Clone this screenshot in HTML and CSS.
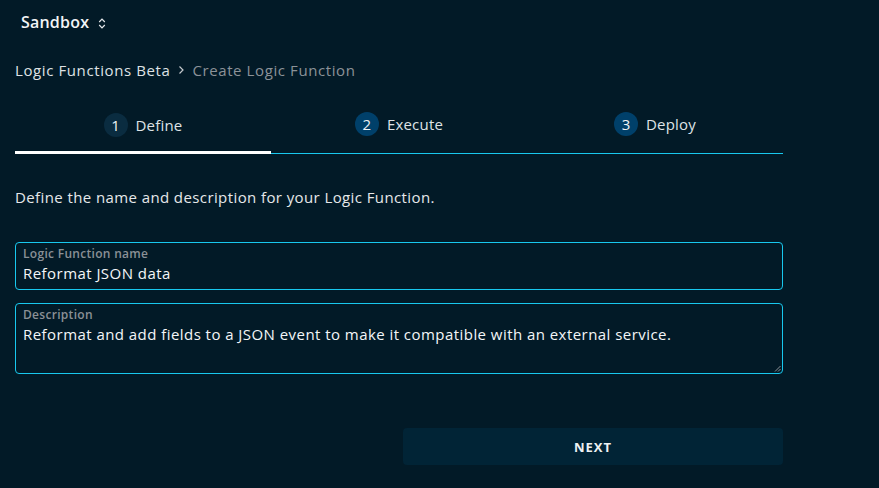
FILE: index.html
```html
<!DOCTYPE html>
<html>
<head>
<meta charset="utf-8">
<link rel="stylesheet" href="styles.css">
</head>
<body>
<div class="page">
  <header class="org">
    <span class="org-name">Sandbox</span>
    <svg class="updown" width="8" height="11" viewBox="0 0 8 11"><path d="M1.2 4 L4 1.2 L6.8 4 M1.2 7 L4 9.8 L6.8 7" fill="none" stroke="#e6e9ec" stroke-width="1.2"/></svg>
  </header>
  <nav class="crumbs">
    <span class="crumb">Logic Functions Beta</span>
    <svg class="chev" width="8" height="10" viewBox="0 0 8 10"><path d="M2.5 1.5 L6 5 L2.5 8.5" fill="none" stroke="#c4c8cc" stroke-width="1.2"/></svg>
    <span class="crumb current">Create Logic Function</span>
  </nav>
  <div class="steps">
    <div class="step active"><span class="num">1</span><span class="label">Define</span></div>
    <div class="step"><span class="num">2</span><span class="label">Execute</span></div>
    <div class="step"><span class="num">3</span><span class="label">Deploy</span></div>
  </div>
  <p class="intro">Define the name and description for your Logic Function.</p>
  <div class="field">
    <label class="field-label">Logic Function name</label>
    <div class="field-value">Reformat JSON data</div>
  </div>
  <div class="field area">
    <label class="field-label">Description</label>
    <div class="field-value">Reformat and add fields to a JSON event to make it compatible with an external service.</div>
    <svg class="grip" width="7" height="7" viewBox="0 0 7 7"><path d="M6.5 1 L1 6.5 M6.5 4 L4 6.5" stroke="#8a9096" stroke-width="1"/></svg>
  </div>
  <div class="actions">
    <button class="next">NEXT</button>
  </div>
</div>
</body>
</html>
```
FILE: styles.css
```css
* { box-sizing: border-box; }
html, body { margin: 0; padding: 0; background: #021a27; }
body { font-family: "Open Sans", "Noto Sans", sans-serif; color: #e8eaec; width: 879px; height: 488px; overflow: hidden; letter-spacing: 0.4px; }
.page { padding: 0 96px 0 15px; }
.org { display: flex; align-items: center; gap: 9px; height: 44px; padding-left: 6px; }
.org-name { font-size: 16px; font-weight: 600; color: #f2f4f6; letter-spacing: 0.2px; }
.updown { margin-top: 2px; }
.crumbs { display: flex; align-items: center; gap: 7px; height: 52px; font-size: 15px; letter-spacing: 0.6px; }
.crumb { color: #dfe2e5; }
.crumb.current { color: #8c9298; }
.steps { display: grid; grid-template-columns: repeat(3, 1fr); border-bottom: 1px solid #18c8ee; height: 58px; }
.step { display: flex; align-items: center; justify-content: center; gap: 8px; padding-top: 2px; padding-bottom: 3px; font-size: 15px; color: #dfe3e6; letter-spacing: 0.2px; }
.step.active { border-bottom: 3px solid #ffffff; margin-bottom: -1px; padding-bottom: 0; }
.num { width: 24px; height: 24px; border-radius: 50%; background: #00406a; display: flex; align-items: center; justify-content: center; font-size: 15px; color: #f0f3f5; letter-spacing: 0; }
.step.active .num { background: #0a2c40; }
.intro { margin: 0; padding: 33px 0 35px; font-size: 15px; line-height: 20px; color: #e6e8ea; }
.field { position: relative; border: 1px solid #18c8ee; border-radius: 4px; height: 48px; padding: 3px 8px 0 7px; margin-bottom: 13px; }
.field.area { height: 71px; }
.field-label { display: block; font-size: 12px; line-height: 16px; font-weight: 600; color: #8a9096; letter-spacing: 0.3px; }
.field-value { font-size: 15px; line-height: 22px; font-weight: 500; color: #f4f6f8; letter-spacing: 0.45px; }
.grip { position: absolute; right: 1px; bottom: 1px; }
.actions { display: flex; justify-content: flex-end; padding-top: 41px; }
.next { width: 380px; height: 37px; border: none; border-radius: 4px; background: #012436; color: #eef1f3; font-family: inherit; font-size: 13px; font-weight: 700; letter-spacing: 1px; }
```
